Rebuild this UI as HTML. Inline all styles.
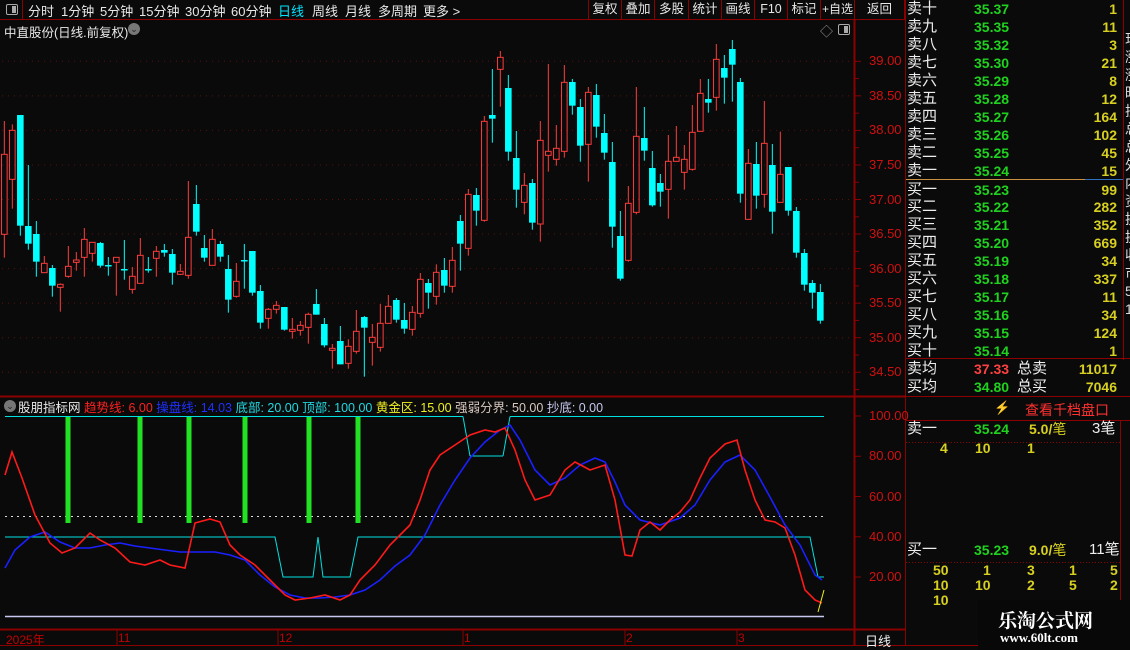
<!DOCTYPE html>
<html><head><meta charset="utf-8">
<style>
*{margin:0;padding:0;box-sizing:border-box}
body{width:1130px;height:650px;background:#0a0a0a;overflow:hidden;position:relative;font-family:"Liberation Sans","Noto Sans CJK SC",sans-serif;color:#ddd}
.a{position:absolute;white-space:nowrap}
.tab{position:absolute;top:1px;font-size:13px;color:#e8e8e8}
.btn{position:absolute;top:0;height:20px;font-size:12.5px;color:#e8e8e8;text-align:center;line-height:19px;border-left:1px solid #8b0000;white-space:nowrap;overflow:hidden}
.ob{position:absolute;left:907px;width:216px;height:18px;font-size:15px;line-height:18px}
.ob .l{position:absolute;left:0;color:#eee}
.ob .p{position:absolute;left:67px;color:#1ed21e;font-size:14px;font-weight:bold}
.ob .v{position:absolute;right:6px;color:#d8d020;font-size:14px;font-weight:bold}
.y{color:#d8d020;font-weight:bold;font-size:14px}
</style></head><body>
<svg class="a" style="left:0;top:0" width="1130" height="650" id="s"></svg>

<div class="a" style="left:0;top:0;width:23px;height:20px;border-right:1px solid #8b0000"></div>
<div class="a" style="left:6px;top:4px;width:12px;height:11px;border:1px solid #aaa;border-radius:2px"><div style="position:absolute;right:1px;top:1px;width:4px;height:7px;background:#aaa"></div></div>
<div class="tab" style="left:28px">分时</div>
<div class="tab" style="left:61px">1分钟</div>
<div class="tab" style="left:100px">5分钟</div>
<div class="tab" style="left:139px">15分钟</div>
<div class="tab" style="left:185px">30分钟</div>
<div class="tab" style="left:231px">60分钟</div>
<div class="tab" style="left:278px;color:#00e5ff">日线</div>
<div class="tab" style="left:312px">周线</div>
<div class="tab" style="left:345px">月线</div>
<div class="tab" style="left:378px">多周期</div>
<div class="tab" style="left:423px">更多 &gt;</div>
<div class="btn" style="left:588px;width:33px">复权</div>
<div class="btn" style="left:621px;width:33px">叠加</div>
<div class="btn" style="left:654px;width:34px">多股</div>
<div class="btn" style="left:688px;width:33px">统计</div>
<div class="btn" style="left:721px;width:33px">画线</div>
<div class="btn" style="left:754px;width:33px">F10</div>
<div class="btn" style="left:787px;width:33px">标记</div>
<div class="btn" style="left:820px;width:34px;font-size:12px">+自选</div>
<div class="btn" style="left:854px;width:51px;border-right:1px solid #8b0000">返回</div>

<div class="a" style="left:4px;top:22px;font-size:12.5px;color:#e8e8e8">中直股份(日线.前复权)</div>
<div class="a" style="left:128px;top:23px;width:12px;height:12px;border-radius:6px;background:#777;color:#222;font-size:9px;text-align:center;line-height:12px">⌄</div>
<div class="a" style="left:820px;top:21px;font-size:13px;color:#999">◇</div>
<div class="a" style="left:838px;top:24px;width:12px;height:11px;border:1px solid #aaa;border-radius:2px"><div style="position:absolute;right:1px;top:1px;width:4px;height:7px;background:#aaa"></div></div>

<div class="a" style="left:4px;top:400px;width:12px;height:12px;border-radius:6px;background:#777;color:#222;font-size:9px;text-align:center;line-height:12px">⌄</div>
<div class="a" style="left:18px;top:397px;font-size:12.5px">
<span style="color:#e8e8e8">股朋指标网</span>
<span style="color:#ff2020">趋势线: 6.00</span>
<span style="color:#2030ff">操盘线: 14.03</span>
<span style="color:#20d8e0">底部: 20.00</span>
<span style="color:#20d8e0">顶部: 100.00</span>
<span style="color:#f0f020">黄金区: 15.00</span>
<span style="color:#d8c8c0">强弱分界: 50.00</span>
<span style="color:#c8c8f0">抄底: 0.00</span></div>

<div id="ax"></div>
<div class="a" style="left:6px;top:631px;font-size:12px;color:#c00000">2025年</div>
<div class="a" style="left:118px;top:631px;font-size:12px;color:#c00000">11</div>
<div class="a" style="left:279px;top:631px;font-size:12px;color:#c00000">12</div>
<div class="a" style="left:464px;top:631px;font-size:12px;color:#c00000">1</div>
<div class="a" style="left:626px;top:631px;font-size:12px;color:#c00000">2</div>
<div class="a" style="left:738px;top:631px;font-size:12px;color:#c00000">3</div>
<div class="a" style="left:865px;top:631px;font-size:13px;color:#eee">日线</div>

<div id="ob"></div>
<div class="ob" style="top:360px"><span class="l">卖均</span><span class="p" style="color:#ff4040">37.33</span><span class="l" style="left:110px">总卖</span><span class="v">11017</span></div>
<div class="ob" style="top:378px"><span class="l">买均</span><span class="p">34.80</span><span class="l" style="left:110px">总买</span><span class="v">7046</span></div>
<div class="a" style="left:994px;top:400px;font-size:13px;color:#8a7020">⚡</div>
<div class="a" style="left:1025px;top:400px;font-size:14px;color:#ff3030">查看千档盘口</div>
<div class="ob" style="top:420px"><span class="l">卖一</span><span class="p">35.24</span><span class="v" style="right:auto;left:122px">5.0/<span style="font-weight:normal">笔</span></span><span class="l" style="left:185px">3笔</span></div>
<div class="a y" style="left:940px;top:440px">4</div><div class="a y" style="left:975px;top:440px">10</div><div class="a y" style="left:1027px;top:440px">1</div>
<div class="ob" style="top:541px"><span class="l">买一</span><span class="p">35.23</span><span class="v" style="right:auto;left:122px">9.0/<span style="font-weight:normal">笔</span></span><span class="l" style="left:182px">11笔</span></div>
<div class="a y" style="left:933px;top:562px">50</div><div class="a y" style="left:983px;top:562px">1</div><div class="a y" style="left:1027px;top:562px">3</div><div class="a y" style="left:1069px;top:562px">1</div><div class="a y" style="left:1110px;top:562px">5</div>
<div class="a y" style="left:933px;top:577px">10</div><div class="a y" style="left:975px;top:577px">10</div><div class="a y" style="left:1027px;top:577px">2</div><div class="a y" style="left:1069px;top:577px">5</div><div class="a y" style="left:1110px;top:577px">2</div>
<div class="a y" style="left:933px;top:592px">10</div>
<div class="a" style="left:1125px;top:30px;font-size:14px;color:#ddd;line-height:18px;width:5px;overflow:hidden">现<br>涨<br>涨<br>昨<br>振<br>总<br>总<br>外<br>内<br>资<br>换<br>换<br>收<br>市<br>5<br>1</div>

<div class="a" style="left:978px;top:600px;width:152px;height:50px;background:#080808"></div>
<div class="a" style="left:998px;top:606px;font-family:'Liberation Serif','Noto Serif CJK SC',serif;font-weight:bold;font-size:19px;color:#fff">乐淘公式网</div>
<div class="a" style="left:1000px;top:630px;font-family:'Liberation Serif',serif;font-weight:bold;font-size:13px;color:#fff">www.60lt.com</div>

<script>
var S=document.getElementById('s'),h='';
function L(x1,y1,x2,y2,c,w,d){h+='<line x1="'+x1+'" y1="'+y1+'" x2="'+x2+'" y2="'+y2+'" stroke="'+c+'" stroke-width="'+(w||1)+'"'+(d?' stroke-dasharray="'+d+'"':'')+'/>';}
function R(x,y,w,hh,f,s){h+='<rect x="'+x+'" y="'+y+'" width="'+w+'" height="'+hh+'" fill="'+f+'"'+(s?' stroke="'+s+'"':'')+'/>';}
var DR='#8b0000';
L(0,19.5,905,19.5,DR);L(0,396.5,905,396.5,DR,2);L(0,629.5,905,629.5,DR,2);L(0,645.5,1130,645.5,DR);
L(854.5,20,854.5,646,DR,2);L(905.5,0,905.5,646,DR);L(1123.5,0,1123.5,360,DR);
L(905,396.5,1130,396.5,DR);L(905,420.5,1130,420.5,DR);L(905,358.5,1130,358.5,DR);
L(906,179.5,1085,179.5,'#c89040');L(1085,179.5,1123,179.5,'#3070c0');
L(906,442.5,1120,442.5,'#8b0000',1,'1,2');L(906,562.5,1120,562.5,'#8b0000',1,'1,2');
L(1120.5,420,1120.5,600,DR);
var prices=['39.00','38.50','38.00','37.50','37.00','36.50','36.00','35.50','35.00','34.50'],ax='';
for(var i=0;i<10;i++){var y=61.3+i*34.55;L(2,y,852,y,'#5a1010',1,'1,5');L(855,y,861,y,DR);L(855,y+17.3,859,y+17.3,DR);
ax+='<div class="a" style="left:869px;top:'+(y-8)+'px;font-size:13px;color:#d01010">'+prices[i]+'</div>';}
var iv=['100.00','80.00','60.00','40.00','20.00'];
for(var i=0;i<5;i++){var y=416+i*40.25;L(855,y,861,y,DR);ax+='<div class="a" style="left:869px;top:'+(y-8)+'px;font-size:13px;color:#d01010">'+iv[i]+'</div>';}
document.getElementById('ax').innerHTML=ax;
var C=[['r',343,583,243,653],['r',271,418,253,506],['c',225,557,225,587],['c',558,611,375,629],['c',582,665,543,710],['r',670,698,648,698],['c',684,737,675,770],['r',733,742,730,815],['r',679,709,618,713],['r',660,667,636,692],['r',598,652,564,710],['r',607,640,607,665],['c',609,677,606,683],['c',675,678,651,707],['r',652,667,652,767],['c',687,691,600,719],['r',709,748,681,761],['r',646,730,594,730],['c',687,691,651,698],['r',634,655,618,710],['c',630,638,612,650],['c',642,698,627,734],['r',694,703,672,705],['r',592,706,423,716],['c',492,575,435,587],['c',624,653,585,665],['r',598,676,567,676],['c',612,650,603,665],['c',687,779,645,818],['r',724,769,669,773],['c',660,664,612,746],['c',633,758,633,767],['c',753,848,735,866],['r',808,835,804,866],['r',796,808,783,821],['c',801,869,801,872],['r',868,874,834,896],['r',856,871,843,887],['r',823,862,818,911],['c',792,824,747,824],['c',852,916,834,922],['r',925,931,912,986],['c',903,973,858,973],['r',919,970,898,986],['r',874,934,810,941],['c',831,863,828,1010],['r',892,907,852,977],['r',850,922,792,935],['r',799,850,765,850],['c',780,839,774,848],['c',840,866,789,881],['r',817,868,798,887],['r',718,820,699,833],
['c',729,758,717,806],['r',697,769,673,794],['c',690,737,654,758],['r',661,739,621,758],['c',543,611,525,692],['r',463,625,447,647],['c',465,512,444,557],['r',244,541,228,545],['c',225,236,87,308],['r',52,88,33,200],['c',144,335,105,362],['c',354,449,273,503],['r',436,487,399,523],['c',429,548,417,569],['r',301,552,243,605],['r',334,346,72,395],['r',325,358,255,377],['r',127,334,75,353],['c',126,197,117,224],['c',201,317,177,365],['r',157,313,141,425],['c',165,260,132,293],['c',279,338,222,359],['c',366,560,306,623],['c',588,716,513,722],['r',490,661,438,665],['r',289,517,141,523],['c',294,332,201,362],['c',384,496,333,500],['c',429,455,402,500],['r',364,448,285,536],['r',352,364,258,364],['r',358,397,315,449],['r',277,388,195,392],['r',160,274,117,274],['c',177,188,117,218],['r',58,172,12,212],['c',84,113,45,191],['c',27,74,0,185],['c',126,461,114,488],['r',370,538,327,538],['c',372,467,306,506],['r',310,463,183,503],['c',375,515,312,581],['r',403,487,275,487],['c',381,512,381,527],['c',513,638,501,653],['c',639,734,627,752],['c',729,758,720,806],['c',756,842,732,851]];
for(var i=0;i<C.length;i++){var c=C[i],x=4.33+8*i,Y=function(v){return 40+v/3};
var bt=Y(c[1]),bb=Y(c[2]),wt=Y(c[3]),wb=Y(c[4]);if(bb-bt<1.5)bb=bt+1.5;
if(c[0]=='r'){L(x,wt,x,bt,'#ff3b3b');L(x,bb,x,wb,'#ff3b3b');R(x-2.8,bt,5.6,bb-bt,'none','#ff3b3b');}
else{L(x,wt,x,wb,'#00ffff');R(x-3.3,bt,6.6,bb-bt,'#00ffff');}}
L(5,416.5,463,416.5,'#00e0e0');L(463,416.5,470,456,'#00e0e0');L(470,456,503,456,'#00e0e0');L(503,456,510,416.5,'#00e0e0');L(510,416.5,824,416.5,'#00e0e0');
h+='<polyline fill="none" stroke="#00e0e0" points="5,537 275,537 283,577 313,577 318,537 323,577 350,577 358,537 810,537 818,577 824,577"/>';
L(5,516.5,824,516.5,'#ddd',1,'2,4');
L(5,616.5,824,616.5,'#c8c8f0',1.5);
[68,140,189,245,309,358].forEach(function(x){R(x-2.5,417,5,106,'#22e022')});
h+='<polyline fill="none" stroke="#1a20ff" stroke-width="1.6" points="5,568 15,550 30,537 45,532 60,542 75,548 90,548 105,545 120,543 135,546 150,548 165,550 180,552 200,552 215,552 230,555 245,560 260,575 275,587 290,595 305,598 320,598 335,597 350,595 365,590 380,580 395,566 410,555 425,535 440,505 455,480 470,458 485,442 500,430 510,425 520,440 535,470 550,485 565,478 580,465 595,458 605,462 615,482 625,505 640,520 660,525 680,518 695,505 710,480 725,462 740,455 755,470 770,497 785,525 800,545 815,575 822,580"/>';
h+='<polyline fill="none" stroke="#ff1a1a" stroke-width="1.6" points="5,475 12,452 22,478 35,515 50,543 62,553 75,548 90,533 100,540 115,548 130,562 145,565 160,560 170,565 185,568 195,523 210,519 220,522 230,545 240,555 255,565 270,580 285,595 295,600 310,598 325,595 340,600 350,595 360,580 375,565 390,545 400,535 410,525 420,500 430,470 440,455 455,445 470,435 485,430 495,432 505,428 515,450 525,480 535,500 550,495 565,470 575,462 590,470 605,465 615,500 625,555 632,556 640,530 650,522 660,530 670,520 680,512 690,500 700,478 710,458 725,444 737,440 745,470 755,500 765,520 775,522 785,528 795,555 805,590 815,600 822,603"/>';
L(818,612,824,590,'#f0f020');
[117,278,463,625,737].forEach(function(x){L(x,630,x,645,DR)});
S.innerHTML=h;
var lab=['卖十','卖九','卖八','卖七','卖六','卖五','卖四','卖三','卖二','卖一','买一','买二','买三','买四','买五','买六','买七','买八','买九','买十'];
var pr=['35.37','35.35','35.32','35.30','35.29','35.28','35.27','35.26','35.25','35.24','35.23','35.22','35.21','35.20','35.19','35.18','35.17','35.16','35.15','35.14'];
var vo=['1','11','3','21','8','12','164','102','45','15','99','282','352','669','34','337','11','34','124','1'];
var o='';for(var i=0;i<20;i++){o+='<div class="ob" style="top:'+(i*17.95+(i>=10?1:0))+'px"><span class="l">'+lab[i]+'</span><span class="p">'+pr[i]+'</span><span class="v">'+vo[i]+'</span></div>';}
document.getElementById('ob').innerHTML=o;
</script>
</body></html>
